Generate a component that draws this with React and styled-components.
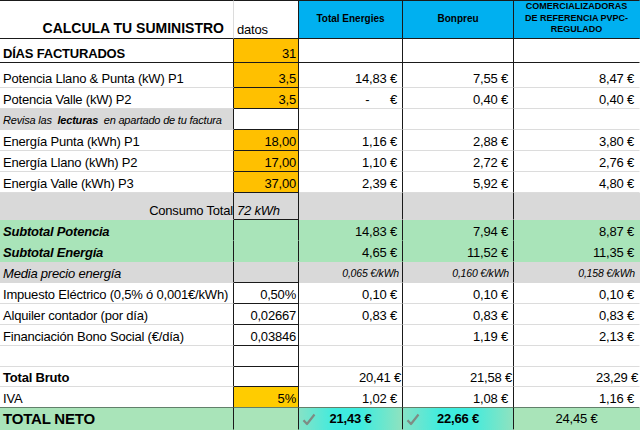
import React from 'react'
import styled, { createGlobalStyle } from 'styled-components'

const GlobalStyle = createGlobalStyle`
  html, body {
    margin: 0;
    padding: 0;
    background: #fff;
  }
  body {
    font-family: "Liberation Sans", Arial, sans-serif;
    color: #000;
  }
`

const BLACK = '#1a1a1a'
const GRID = '#dcdcdc'
const GRAY = '#d9d9d9'
const GREEN = '#a9e4b9'
const ORANGE = '#ffc000'
const YELLOW = '#ffcc00'
const BLUE = '#00b0f0'

const Sheet = styled.div`
  display: grid;
  grid-template-columns: 234px 65px 104px 111px 126px;
  grid-template-rows: 39px 24px 25px repeat(5, 21px) 27px repeat(7, 21px) 20px 21px 22px;
  width: 640px;
  height: 430px;
  overflow: hidden;
  letter-spacing: -0.2px;
`

const justify = { left: 'flex-start', right: 'flex-end', center: 'center' }

const Cell = styled.div`
  position: relative;
  box-sizing: border-box;
  display: flex;
  align-items: ${p => p.$valign || 'flex-end'};
  justify-content: ${p => justify[p.$align || 'left']};
  background: ${p => p.$bg || '#fff'};
  border-right: 1px solid ${p => p.$rb || 'transparent'};
  border-bottom: 1px solid ${p => p.$bb || 'transparent'};
  border-top: ${p => (p.$top ? `1px solid ${BLACK}` : 'none')};
  padding: 0 ${p => p.$pr ?? 5}px 1px 3px;
  font-size: ${p => p.$size || 13}px;
  line-height: 15px;
  font-weight: ${p => (p.$bold ? 700 : 400)};
  font-style: ${p => (p.$italic ? 'italic' : 'normal')};
  white-space: pre;
  overflow: visible;
  z-index: ${p => (p.$over ? 1 : 0)};
`

const Title = styled(Cell)`
  font-size: 14px;
  font-weight: 700;
  letter-spacing: 0;
  padding: 0 9px 2px 3px;
`

const Provider = styled(Cell)`
  background: ${BLUE};
  align-items: center;
  justify-content: center;
  text-align: center;
  white-space: normal;
  font-weight: 700;
  font-size: 10px;
  letter-spacing: 0;
  padding: 0 4px 2px;
`

const SmallProvider = styled(Provider)`
  font-size: 9px;
  line-height: 11.5px;
  padding: 0 6px 2px;
`

const Input = styled(Cell)`
  padding-right: 2px;
`

const Note = styled.span`
  font-size: 11px;
  font-style: italic;
`

const TotalCell = styled(Cell)`
  align-items: center;
  justify-content: center;
  padding: 0 4px 0 4px;
  background: ${p => (p.$glow ? `linear-gradient(90deg, #86e2c6 0%, #3eecdf 35%, #3eecdf 60%, #8fe2bf 100%)` : GREEN)};
  font-weight: ${p => (p.$glow ? 700 : 400)};
`

const Check = styled.svg`
  position: absolute;
  left: 3px;
  top: 5px;
  width: 14px;
  height: 13px;
`

const Bold = styled.b`
  font-weight: 700;
`

const CheckMark = () => (
  <Check viewBox="0 0 14 13">
    <path d="M1.5 7.2 L5 11 L12.5 1.5" fill="none" stroke="#7e8c84" strokeWidth="2.2" strokeLinejoin="round" />
  </Check>
)

const rows = [
  { label: 'DÍAS FACTURADOS', bold: true, input: '31', inputBg: ORANGE, vals: ['', '', ''], bb: BLACK },
  { label: 'Potencia Llano & Punta (kW) P1', input: '3,5', inputBg: ORANGE, vals: ['14,83 €', '7,55 €', '8,47 €'] },
  { label: 'Potencia Valle (kW) P2', input: '3,5', inputBg: ORANGE, vals: ['-      €', '0,40 €', '0,40 €'] },
  { label: 'revisa', labelBg: GRAY, vals: ['', '', ''] },
  { label: 'Energía Punta (kWh) P1', input: '18,00', inputBg: ORANGE, vals: ['1,16 €', '2,88 €', '3,80 €'] },
  { label: 'Energía Llano (kWh) P2', input: '17,00', inputBg: ORANGE, vals: ['1,10 €', '2,72 €', '2,76 €'] },
  { label: 'Energía Valle (kWh) P3', input: '37,00', inputBg: ORANGE, vals: ['2,39 €', '5,92 €', '4,80 €'] },
  { label: 'Consumo Total', labelAlign: 'right', bg: GRAY, input: '72 kWh', inputItalic: true, inputAlign: 'left', vals: ['', '', ''] },
  { label: 'Subtotal Potencia', bold: true, italic: true, bg: GREEN, inputBb: 'transparent', vals: ['14,83 €', '7,94 €', '8,87 €'] },
  { label: 'Subtotal Energía', bold: true, italic: true, bg: GREEN, inputBb: 'transparent', vals: ['4,65 €', '11,52 €', '11,35 €'] },
  { label: 'Media precio energía', italic: true, bg: GRAY, small: true, vals: ['0,065 €/kWh', '0,160 €/kWh', '0,158 €/kWh'] },
  { label: 'Impuesto Eléctrico (0,5% ó 0,001€/kWh)', input: '0,50%', vals: ['0,10 €', '0,10 €', '0,10 €'] },
  { label: 'Alquiler contador (por día)', input: '0,02667', vals: ['0,83 €', '0,83 €', '0,83 €'] },
  { label: 'Financiación Bono Social (€/día)', input: '0,03846', vals: ['', '1,19 €', '2,13 €'] },
  { label: '', vals: ['', '', ''] },
  { label: 'Total Bruto', bold: true, vals: ['20,41 €', '21,58 €', '23,29 €'], pr: 1 },
  { label: 'IVA', input: '5%', inputBg: YELLOW, vals: ['1,02 €', '1,08 €', '1,16 €'], bb: '#62806a' },
]

const SheetRow = ({ row }) => {
  const fill = row.bg
  const bb = row.bb || (fill ? 'transparent' : GRID)
  const labelBg = row.labelBg || fill
  return (
    <>
      <Cell
        $bg={labelBg}
        $rb={BLACK}
        $bb={row.labelBg ? 'transparent' : bb}
        $bold={row.bold}
        $italic={row.italic}
        $align={row.labelAlign}
        $pr={row.labelAlign === 'right' ? 0 : 5}
      >
        {row.label === 'revisa' ? (
          <Note>
            Revisa las  <Bold>lecturas</Bold>  en apartado de tu factura
          </Note>
        ) : (
          row.label
        )}
      </Cell>
      <Input
        $bg={row.inputBg || fill}
        $rb={BLACK}
        $bb={row.inputBb || (row.bb && row.bb !== BLACK ? row.bb : BLACK)}
        $align={row.inputAlign || 'right'}
        $italic={row.inputItalic}
        $over
      >
        {row.input || ''}
      </Input>
      {row.vals.map((v, i) => (
        <Cell
          key={i}
          $bg={fill}
          $rb={i < 2 ? BLACK : 'transparent'}
          $bb={bb}
          $align="right"
          $italic={row.small}
          $size={row.small ? 10.5 : 13}
          $pr={row.pr ?? (row.small ? (i === 0 ? 3 : 4) : 5)}
        >
          {v}
        </Cell>
      ))}
    </>
  )
}

const App = () => {
  return (
    <>
      <GlobalStyle />
      <Sheet>
        <Title $top $rb={GRID} $bb={BLACK} $align="right">
          CALCULA TU SUMINISTRO
        </Title>
        <Cell $top $rb={BLACK} $bb={BLACK}>datos</Cell>
        <Provider $top $rb={BLACK} $bb={BLACK}>Total Energies</Provider>
        <Provider $top $rb={BLACK} $bb={BLACK}>Bonpreu</Provider>
        <SmallProvider $top $bb={BLACK}>COMERCIALIZADORAS DE REFERENCIA PVPC-REGULADO</SmallProvider>

        {rows.map((row, i) => (
          <SheetRow key={i} row={row} />
        ))}

        <Cell $bg={GREEN} $rb={BLACK} $valign="center" $bold $size={15}>
          TOTAL NETO
        </Cell>
        <Input $bg={GREEN} $rb={BLACK}>{''}</Input>
        <TotalCell $glow $rb={BLACK}>
          <CheckMark />
          21,43 €
        </TotalCell>
        <TotalCell $glow $rb={BLACK}>
          <CheckMark />
          22,66 €
        </TotalCell>
        <TotalCell>24,45 €</TotalCell>
      </Sheet>
    </>
  )
}

export default App
